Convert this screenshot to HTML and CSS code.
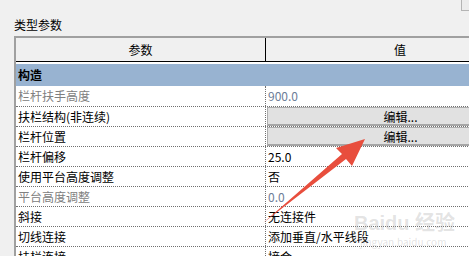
FILE: index.html
```html
<!DOCTYPE html>
<html lang="zh-CN">
<head>
    <meta charset="UTF-8">
    <title>类型参数</title>
    <link rel="stylesheet" href="styles.css">
</head>
<body>
    <div class="page">
        <div class="toolbar"><span class="tool-btn"></span></div>
        <div class="title">类型参数</div>

        <!-- 参数表 -->
        <div class="grid">
            <div class="head">
                <div class="hcell">参数</div>
                <div class="hcell">值</div>
            </div>
            <div class="group">构造</div>
            <div class="row first">
                <div class="name off">栏杆扶手高度</div>
                <div class="val off">900.0</div>
            </div>
            <div class="row">
                <div class="name">扶栏结构(非连续)</div>
                <div class="val"><span class="edit">编辑...</span></div>
            </div>
            <div class="row">
                <div class="name">栏杆位置</div>
                <div class="val"><span class="edit">编辑...</span></div>
            </div>
            <div class="row">
                <div class="name">栏杆偏移</div>
                <div class="val">25.0</div>
            </div>
            <div class="row">
                <div class="name">使用平台高度调整</div>
                <div class="val">否</div>
            </div>
            <div class="row">
                <div class="name off">平台高度调整</div>
                <div class="val off">0.0</div>
            </div>
            <div class="row">
                <div class="name">斜接</div>
                <div class="val">无连接件</div>
            </div>
            <div class="row">
                <div class="name">切线连接</div>
                <div class="val">添加垂直/水平线段</div>
            </div>
            <div class="row">
                <div class="name">扶栏连接</div>
                <div class="val">接合</div>
            </div>
        </div>
    </div>

    <!-- 水印 -->
    <div class="mark">
        <span class="mark-big">Baidu 经验</span>
        <span class="mark-small">jingyan.baidu.com</span>
    </div>

    <!-- 红色箭头 -->
    <svg class="arrow" width="469" height="256" viewBox="0 0 469 256">
        <polygon points="365,139 336,148 342,154 263,223 346,159 352,166" fill="#e84e3d"/>
    </svg>
</body>
</html>
```

FILE: styles.css
```css
body {
    margin: 0;
    background: #f0f0f0;
    font-family: "Noto Sans CJK SC", "Noto Sans", sans-serif;
    font-size: 12px;
    color: #000;
    overflow: hidden;
    width: 469px;
    height: 256px;
    position: relative;
}
.page {
    width: 560px;
    padding-left: 14px;
}
.toolbar {
    height: 12px;
    display: flex;
}
.tool-btn {
    margin-left: 447px;
    width: 30px;
    height: 10px;
    background: #ececec;
    border: 1px solid #b4b4b4;
    border-top: none;
}
.title {
    height: 24px;
    line-height: 26px;
}
.grid {
    border-top: 2px solid #a0a0a0;
    border-left: 2px solid #a0a0a0;
    background: #fff;
}
.head {
    display: grid;
    grid-template-columns: 250px 268px;
    height: 23px;
    background: #f0f0f0;
    border-bottom: 1px solid #000;
}
.hcell {
    text-align: center;
    line-height: 23px;
}
.hcell:first-child {
    border-right: 1px solid #000;
}
.group {
    margin-top: 2px;
    height: 22px;
    line-height: 22px;
    background: #98b3d1;
    font-weight: bold;
    padding-left: 2px;
}
.row {
    display: grid;
    grid-template-columns: 250px 268px;
    height: 19px;
    line-height: 19px;
    border-bottom: 1px dotted #707070;
}
.row.first {
    height: 20px;
    line-height: 20px;
}
.name {
    padding-left: 2px;
    border-right: 1px dotted #707070;
    white-space: nowrap;
}
.val {
    padding-left: 2px;
    white-space: nowrap;
}
.off {
    color: #808080;
}
.val.off {
    color: #6c7d98;
}
.edit {
    display: block;
    margin-left: -1px;
    height: 19px;
    line-height: 17px;
    text-align: center;
    background: #e1e1e1;
    border: 1px solid #adadad;
    border-bottom: 2px solid #a6a6a6;
    box-sizing: border-box;
}
.mark {
    position: absolute;
    left: 354px;
    top: 213px;
    color: rgba(160, 160, 160, 0.3);
    display: flex;
    flex-direction: column;
    line-height: 1;
    white-space: nowrap;
}
.mark-big {
    font-size: 20px;
    font-weight: bold;
    font-family: "Liberation Sans", "Noto Sans CJK SC", sans-serif;
}
.mark-small {
    font-size: 10px;
    margin-top: 4px;
    padding-left: 6px;
}
.arrow {
    position: absolute;
    left: 0;
    top: 0;
}
```
